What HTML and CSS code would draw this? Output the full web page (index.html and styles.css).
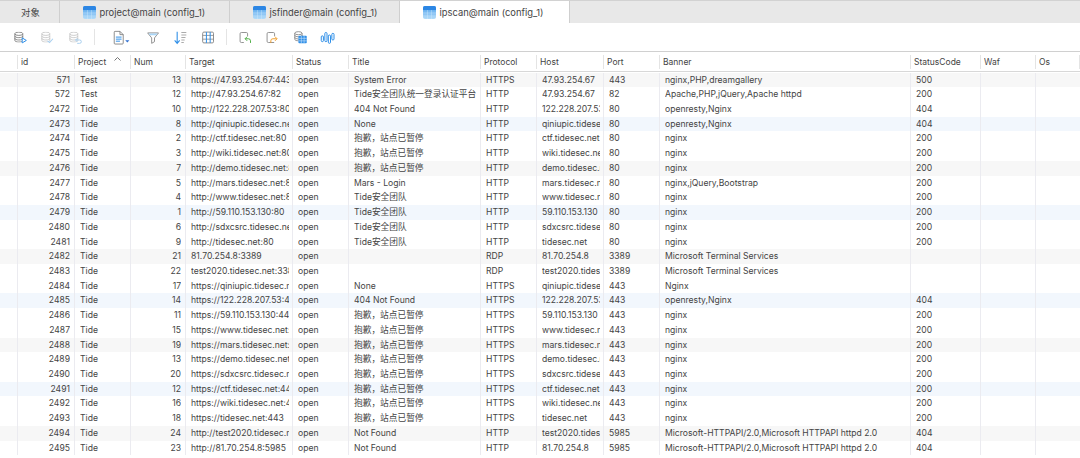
FILE: index.html
```html
<!DOCTYPE html>
<html lang="zh">
<head>
<meta charset="utf-8">
<title>ipscan@main (config_1)</title>
<link rel="stylesheet" href="styles.css">
</head>
<body>
<svg class="defs" width="0" height="0" aria-hidden="true">
  <defs>
    <linearGradient id="tg" x1="0" y1="0" x2="0" y2="1"><stop offset="0" stop-color="#4a9fec"/><stop offset="1" stop-color="#b4dcf9"/></linearGradient>
    <symbol id="tabicon" viewBox="0 0 13 13"><rect width="13" height="13" rx="2" fill="url(#tg)"/><path d="M0 2a2 2 0 0 1 2-2h9a2 2 0 0 1 2 2v2h-13z" fill="#2c86e4"/><path d="M0 7h13M0 10h13M4.500 4v9M8.500 4v9" stroke="#d8edfc" stroke-width=".5" stroke-opacity=".7" fill="none"/></symbol>
    <symbol id="db" viewBox="0 0 12 13"><ellipse cx="6" cy="2.500" rx="4.800" ry="2" fill="none" stroke="currentColor"/><path d="M1.200 2.500v8c0 1.100 2.100 2 4.800 2s4.800-.9 4.800-2v-8M1.200 5.200c0 1.100 2.100 2 4.800 2s4.800-.9 4.800-2M1.200 8c0 1.100 2.100 2 4.800 2s4.800-.9 4.800-2" fill="none" stroke="currentColor"/></symbol>
  </defs>
</svg>
<nav class="tabs">
  <div class="tab plain">对象</div>
  <div class="tab"><svg class="ti"><use href="#tabicon"/></svg>project@main (config_1)</div>
  <div class="tab"><svg class="ti"><use href="#tabicon"/></svg>jsfinder@main (config_1)</div>
  <div class="tab active"><svg class="ti"><use href="#tabicon"/></svg>ipscan@main (config_1)</div>
</nav>
<div class="toolbar">
  <div class="group g1">
    <svg class="ic" viewBox="0 0 18 18"><use href="#db" x="1" y="2" width="12" height="13" color="#777"/><path d="M11 9.500v6l5-3z" fill="#fff" stroke="#2f8fe8" stroke-width="1.200"/></svg>
    <svg class="ic" viewBox="0 0 18 18"><use href="#db" x="1" y="2" width="12" height="13" color="#c4c4c4"/><path d="M9 13l2.500 2 4-4.500" fill="none" stroke="#a9d0f0" stroke-width="1.300"/></svg>
    <svg class="ic" viewBox="0 0 18 18"><use href="#db" x="1" y="2" width="12" height="13" color="#c4c4c4"/><path d="M9.500 12h4.500a2 2 0 0 1 0 4h-3M11 10l-2 2 2 2" fill="none" stroke="#a9d0f0" stroke-width="1.200"/></svg>
  </div>
  <div class="group g2">
    <svg class="ic wide" viewBox="0 0 22 18"><path d="M2.500 1.500h6l4 4v10.500a1 1 0 0 1-1 1h-9a1 1 0 0 1-1-1v-13.500a1 1 0 0 1 1-1zM8.500 1.500v4h4" fill="#fff" stroke="#777"/><path d="M3.500 8.500h7M3.500 11h7M3.500 13.500h5" stroke="#2f8fe8" stroke-width="1.200"/><path d="M15 12.500h5l-2.500 2.500z" fill="#2f6fd0"/></svg>
    <svg class="ic" viewBox="0 0 18 18"><path d="M2 3.500h13l-4.800 6v4.500l-3.400 2v-6.500z" fill="none" stroke="#8a8a8a" stroke-width="1.100"/><path d="M3 4.200h11l-1.800 2.200h-7.400z" fill="#a9d6f8"/></svg>
    <svg class="ic" viewBox="0 0 18 18"><path d="M5 2v13M2 12.500l3 3.500 3-3.500" fill="none" stroke="#2f8fe8" stroke-width="1.300"/><path d="M10 3h6M10 6h6M10 9h5M10 12h4M10 15h3" stroke="#9a9a9a"/></svg>
    <svg class="ic" viewBox="0 0 18 18"><rect x="2" y="2.500" width="13" height="13" rx="1.500" fill="none" stroke="#777"/><path d="M2 6.500h13M2 11h13" stroke="#8a8a8a"/><path d="M6.500 2.500v13M11 2.500v13" stroke="#2f8fe8" stroke-width="1.200"/></svg>
  </div>
  <div class="group g3">
    <svg class="ic" viewBox="0 0 18 18"><path d="M7 15h-3a1.500 1.500 0 0 1-1.500-1.500v-9a1.500 1.500 0 0 1 1.500-1.500h6a1.500 1.500 0 0 1 1.500 1.500v3" fill="none" stroke="#8a8a8a" stroke-width="1.100"/><path d="M15 15.500v-2.500a2.500 2.500 0 0 0-2.500-2.500h-4M11 8l-2.500 2.500 2.500 2.500" fill="none" stroke="#52b04a" stroke-width="1.200"/></svg>
    <svg class="ic" viewBox="0 0 18 18"><path d="M11 15h-7a1.500 1.500 0 0 1-1.500-1.500v-9a1.500 1.500 0 0 1 1.500-1.500h6a1.500 1.500 0 0 1 1.500 1.500v3" fill="none" stroke="#8a8a8a" stroke-width="1.100"/><path d="M7 15.500v-2.500a2.500 2.500 0 0 1 2.500-2.500h4.500M12 8l2.500 2.500-2.500 2.500" fill="none" stroke="#f0a030" stroke-width="1.200"/></svg>
    <svg class="ic" viewBox="0 0 18 18"><use href="#db" x="1" y="1" width="11" height="13" color="#777"/><rect x="6.500" y="7" width="10" height="9" rx="1" fill="#2f8fe8"/><path d="M6.500 10h10M6.500 13h10M10 7v9M13.300 7v9" stroke="#cfe6fa" stroke-width=".7"/></svg>
    <svg class="ic" viewBox="0 0 18 18"><g fill="none" stroke="#2f8fe8" stroke-width="1.200"><rect x="1.500" y="7" width="2.600" height="7" rx="1.300"/><rect x="5.800" y="3" width="2.600" height="11" rx="1.300"/><rect x="10" y="6" width="2.600" height="10" rx="1.300"/><rect x="14.200" y="4" width="2.600" height="8" rx="1.300"/></g></svg>
  </div>
</div>
<main class="grid">
  <div class="row head">
    <div class="c"></div><div class="c">id</div><div class="c sorted">Project<svg class="caret" viewBox="0 0 7 4"><path d="M.5 3.500l3-3 3 3" fill="none" stroke="#777"/></svg></div><div class="c">Num</div><div class="c">Target</div><div class="c">Status</div><div class="c">Title</div><div class="c">Protocol</div><div class="c">Host</div><div class="c">Port</div><div class="c">Banner</div><div class="c">StatusCode</div><div class="c">Waf</div><div class="c">Os</div>
  </div>
  <div class="rows">
    <div class="row grey"><div class="c"></div><div class="c n">571</div><div class="c">Test</div><div class="c n">13</div><div class="c">https://47.93.254.67:443</div><div class="c">open</div><div class="c">System Error</div><div class="c">HTTPS</div><div class="c">47.93.254.67</div><div class="c">443</div><div class="c">nginx,PHP,dreamgallery</div><div class="c">500</div><div class="c"></div><div class="c"></div></div>
    <div class="row"><div class="c"></div><div class="c n">572</div><div class="c">Test</div><div class="c n">12</div><div class="c">http://47.93.254.67:82</div><div class="c">open</div><div class="c">Tide<span class="zh">安全团队统一登录认证平台</span></div><div class="c">HTTP</div><div class="c">47.93.254.67</div><div class="c">82</div><div class="c">Apache,PHP,jQuery,Apache httpd</div><div class="c">200</div><div class="c"></div><div class="c"></div></div>
    <div class="row"><div class="c"></div><div class="c n">2472</div><div class="c">Tide</div><div class="c n">10</div><div class="c">http://122.228.207.53:80</div><div class="c">open</div><div class="c">404 Not Found</div><div class="c">HTTP</div><div class="c">122.228.207.53</div><div class="c">80</div><div class="c">openresty,Nginx</div><div class="c">404</div><div class="c"></div><div class="c"></div></div>
    <div class="row blue"><div class="c"></div><div class="c n">2473</div><div class="c">Tide</div><div class="c n">8</div><div class="c">http://qiniupic.tidesec.net:80</div><div class="c">open</div><div class="c">None</div><div class="c">HTTP</div><div class="c">qiniupic.tidesec.net</div><div class="c">80</div><div class="c">openresty,Nginx</div><div class="c">404</div><div class="c"></div><div class="c"></div></div>
    <div class="row"><div class="c"></div><div class="c n">2474</div><div class="c">Tide</div><div class="c n">2</div><div class="c">http://ctf.tidesec.net:80</div><div class="c">open</div><div class="c"><span class="zh">抱歉&#xFF0C;站点已暂停</span></div><div class="c">HTTP</div><div class="c">ctf.tidesec.net</div><div class="c">80</div><div class="c">nginx</div><div class="c">200</div><div class="c"></div><div class="c"></div></div>
    <div class="row"><div class="c"></div><div class="c n">2475</div><div class="c">Tide</div><div class="c n">3</div><div class="c">http://wiki.tidesec.net:80</div><div class="c">open</div><div class="c"><span class="zh">抱歉&#xFF0C;站点已暂停</span></div><div class="c">HTTP</div><div class="c">wiki.tidesec.net</div><div class="c">80</div><div class="c">nginx</div><div class="c">200</div><div class="c"></div><div class="c"></div></div>
    <div class="row grey"><div class="c"></div><div class="c n">2476</div><div class="c">Tide</div><div class="c n">7</div><div class="c">http://demo.tidesec.net:80</div><div class="c">open</div><div class="c"><span class="zh">抱歉&#xFF0C;站点已暂停</span></div><div class="c">HTTP</div><div class="c">demo.tidesec.net</div><div class="c">80</div><div class="c">nginx</div><div class="c">200</div><div class="c"></div><div class="c"></div></div>
    <div class="row"><div class="c"></div><div class="c n">2477</div><div class="c">Tide</div><div class="c n">5</div><div class="c">http://mars.tidesec.net:80</div><div class="c">open</div><div class="c">Mars - Login</div><div class="c">HTTP</div><div class="c">mars.tidesec.net</div><div class="c">80</div><div class="c">nginx,jQuery,Bootstrap</div><div class="c">200</div><div class="c"></div><div class="c"></div></div>
    <div class="row"><div class="c"></div><div class="c n">2478</div><div class="c">Tide</div><div class="c n">4</div><div class="c">http://www.tidesec.net:80</div><div class="c">open</div><div class="c">Tide<span class="zh">安全团队</span></div><div class="c">HTTP</div><div class="c">www.tidesec.net</div><div class="c">80</div><div class="c">nginx</div><div class="c">200</div><div class="c"></div><div class="c"></div></div>
    <div class="row blue"><div class="c"></div><div class="c n">2479</div><div class="c">Tide</div><div class="c n">1</div><div class="c">http://59.110.153.130:80</div><div class="c">open</div><div class="c">Tide<span class="zh">安全团队</span></div><div class="c">HTTP</div><div class="c">59.110.153.130</div><div class="c">80</div><div class="c">nginx</div><div class="c">200</div><div class="c"></div><div class="c"></div></div>
    <div class="row"><div class="c"></div><div class="c n">2480</div><div class="c">Tide</div><div class="c n">6</div><div class="c">http://sdxcsrc.tidesec.net:80</div><div class="c">open</div><div class="c">Tide<span class="zh">安全团队</span></div><div class="c">HTTP</div><div class="c">sdxcsrc.tidesec.net</div><div class="c">80</div><div class="c">nginx</div><div class="c">200</div><div class="c"></div><div class="c"></div></div>
    <div class="row"><div class="c"></div><div class="c n">2481</div><div class="c">Tide</div><div class="c n">9</div><div class="c">http://tidesec.net:80</div><div class="c">open</div><div class="c">Tide<span class="zh">安全团队</span></div><div class="c">HTTP</div><div class="c">tidesec.net</div><div class="c">80</div><div class="c">nginx</div><div class="c">200</div><div class="c"></div><div class="c"></div></div>
    <div class="row grey"><div class="c"></div><div class="c n">2482</div><div class="c">Tide</div><div class="c n">21</div><div class="c">81.70.254.8:3389</div><div class="c">open</div><div class="c"></div><div class="c">RDP</div><div class="c">81.70.254.8</div><div class="c">3389</div><div class="c">Microsoft Terminal Services</div><div class="c"></div><div class="c"></div><div class="c"></div></div>
    <div class="row"><div class="c"></div><div class="c n">2483</div><div class="c">Tide</div><div class="c n">22</div><div class="c">test2020.tidesec.net:3389</div><div class="c">open</div><div class="c"></div><div class="c">RDP</div><div class="c">test2020.tidesec.net</div><div class="c">3389</div><div class="c">Microsoft Terminal Services</div><div class="c"></div><div class="c"></div><div class="c"></div></div>
    <div class="row"><div class="c"></div><div class="c n">2484</div><div class="c">Tide</div><div class="c n">17</div><div class="c">https://qiniupic.tidesec.net:443</div><div class="c">open</div><div class="c">None</div><div class="c">HTTPS</div><div class="c">qiniupic.tidesec.net</div><div class="c">443</div><div class="c">Nginx</div><div class="c"></div><div class="c"></div><div class="c"></div></div>
    <div class="row blue"><div class="c"></div><div class="c n">2485</div><div class="c">Tide</div><div class="c n">14</div><div class="c">https://122.228.207.53:443</div><div class="c">open</div><div class="c">404 Not Found</div><div class="c">HTTPS</div><div class="c">122.228.207.53</div><div class="c">443</div><div class="c">openresty,Nginx</div><div class="c">404</div><div class="c"></div><div class="c"></div></div>
    <div class="row"><div class="c"></div><div class="c n">2486</div><div class="c">Tide</div><div class="c n">11</div><div class="c">https://59.110.153.130:443</div><div class="c">open</div><div class="c"><span class="zh">抱歉&#xFF0C;站点已暂停</span></div><div class="c">HTTPS</div><div class="c">59.110.153.130</div><div class="c">443</div><div class="c">nginx</div><div class="c">200</div><div class="c"></div><div class="c"></div></div>
    <div class="row"><div class="c"></div><div class="c n">2487</div><div class="c">Tide</div><div class="c n">15</div><div class="c">https://www.tidesec.net:443</div><div class="c">open</div><div class="c"><span class="zh">抱歉&#xFF0C;站点已暂停</span></div><div class="c">HTTPS</div><div class="c">www.tidesec.net</div><div class="c">443</div><div class="c">nginx</div><div class="c">200</div><div class="c"></div><div class="c"></div></div>
    <div class="row grey"><div class="c"></div><div class="c n">2488</div><div class="c">Tide</div><div class="c n">19</div><div class="c">https://mars.tidesec.net:443</div><div class="c">open</div><div class="c"><span class="zh">抱歉&#xFF0C;站点已暂停</span></div><div class="c">HTTPS</div><div class="c">mars.tidesec.net</div><div class="c">443</div><div class="c">nginx</div><div class="c">200</div><div class="c"></div><div class="c"></div></div>
    <div class="row"><div class="c"></div><div class="c n">2489</div><div class="c">Tide</div><div class="c n">13</div><div class="c">https://demo.tidesec.net:443</div><div class="c">open</div><div class="c"><span class="zh">抱歉&#xFF0C;站点已暂停</span></div><div class="c">HTTPS</div><div class="c">demo.tidesec.net</div><div class="c">443</div><div class="c">nginx</div><div class="c">200</div><div class="c"></div><div class="c"></div></div>
    <div class="row"><div class="c"></div><div class="c n">2490</div><div class="c">Tide</div><div class="c n">20</div><div class="c">https://sdxcsrc.tidesec.net:443</div><div class="c">open</div><div class="c"><span class="zh">抱歉&#xFF0C;站点已暂停</span></div><div class="c">HTTPS</div><div class="c">sdxcsrc.tidesec.net</div><div class="c">443</div><div class="c">nginx</div><div class="c">200</div><div class="c"></div><div class="c"></div></div>
    <div class="row blue"><div class="c"></div><div class="c n">2491</div><div class="c">Tide</div><div class="c n">12</div><div class="c">https://ctf.tidesec.net:443</div><div class="c">open</div><div class="c"><span class="zh">抱歉&#xFF0C;站点已暂停</span></div><div class="c">HTTPS</div><div class="c">ctf.tidesec.net</div><div class="c">443</div><div class="c">nginx</div><div class="c">200</div><div class="c"></div><div class="c"></div></div>
    <div class="row"><div class="c"></div><div class="c n">2492</div><div class="c">Tide</div><div class="c n">16</div><div class="c">https://wiki.tidesec.net:443</div><div class="c">open</div><div class="c"><span class="zh">抱歉&#xFF0C;站点已暂停</span></div><div class="c">HTTPS</div><div class="c">wiki.tidesec.net</div><div class="c">443</div><div class="c">nginx</div><div class="c">200</div><div class="c"></div><div class="c"></div></div>
    <div class="row"><div class="c"></div><div class="c n">2493</div><div class="c">Tide</div><div class="c n">18</div><div class="c">https://tidesec.net:443</div><div class="c">open</div><div class="c"><span class="zh">抱歉&#xFF0C;站点已暂停</span></div><div class="c">HTTPS</div><div class="c">tidesec.net</div><div class="c">443</div><div class="c">nginx</div><div class="c">200</div><div class="c"></div><div class="c"></div></div>
    <div class="row grey"><div class="c"></div><div class="c n">2494</div><div class="c">Tide</div><div class="c n">24</div><div class="c">http://test2020.tidesec.net:5985</div><div class="c">open</div><div class="c">Not Found</div><div class="c">HTTP</div><div class="c">test2020.tidesec.net</div><div class="c">5985</div><div class="c">Microsoft-HTTPAPI/2.0,Microsoft HTTPAPI httpd 2.0</div><div class="c">404</div><div class="c"></div><div class="c"></div></div>
    <div class="row"><div class="c"></div><div class="c n">2495</div><div class="c">Tide</div><div class="c n">23</div><div class="c">http://81.70.254.8:5985</div><div class="c">open</div><div class="c">Not Found</div><div class="c">HTTP</div><div class="c">81.70.254.8</div><div class="c">5985</div><div class="c">Microsoft-HTTPAPI/2.0,Microsoft HTTPAPI httpd 2.0</div><div class="c">404</div><div class="c"></div><div class="c"></div></div>
  </div>
</main>
</body>
</html>
```
FILE: styles.css
```css
* { box-sizing: border-box; }
html, body { margin: 0; height: 458px; overflow: hidden; background: #fff; }
body { font-family: Inter, "Liberation Sans", "Noto Sans CJK SC", sans-serif; color: #444; font-size: 8.600px; }
.defs { display: block; height: 0; }

.tabs { display: flex; height: 23px; background: #e8e8e8; border-top: 1px solid #d2d2d2; color: #444; font-size: 9.400px; }
.tab { width: 170px; display: flex; align-items: center; padding-left: 23px; gap: 3.500px; border-right: 1px solid #cfcfcf; white-space: nowrap; }
.tab.plain { width: 60px; padding-left: 21px; font-family: "Noto Sans CJK SC", sans-serif; }
.tab.active { background: #fff; border-left: 1px solid #cfcfcf; margin-left: -1px; width: 171px; }
.ti { width: 13px; height: 13px; flex: none; }

.toolbar { display: flex; align-items: center; height: 28px; padding-left: 12.500px; background: #fff; }
.group { display: flex; align-items: center; gap: 12.500px; }
.g1 { width: 82.500px; height: 16px; border-right: 1px solid #e4e4e4; }
.g2 { width: 132px; height: 16px; padding-left: 18px; border-right: 1px solid #e4e4e4; }
.g3 { padding-left: 10.500px; }
.ic { width: 15px; height: 15px; flex: none; }
.ic.wide { width: 18px; margin-right: 2px; }

.row { display: grid; grid-template-columns: 18px 57px 56px 55px 107px 56px 132px 56px 67px 56px 251px 70px 55px 44px; height: 14.720px; line-height: 14.720px; }
.c { padding: 0 3px 0 5px; border-right: 1px solid #ebebf0; white-space: nowrap; overflow: clip; overflow-clip-margin: content-box; }
.c.n { text-align: right; padding-right: 4px; }
.c:last-child { border-right: 0; }
.zh { font-family: "Noto Sans CJK SC", sans-serif; font-size: 8.700px; }
.grey { background: #f7f7f7; }
.blue { background: #f2f7fd; }

.head { height: 21px; border-top: 1px solid #d0d0d0; border-bottom: 1px solid #d8d8d8; background: #fff; font-size: 8.500px; }
.head .c { padding-left: 3px; position: relative; display: block; border-right: 1px solid #e4e4e4; height: 14px; margin-top: 3px; line-height: 15px; }
.caret { position: absolute; right: 9px; top: 2px; width: 7px; height: 4px; }
.rows { display: block; padding-top: 0.600px; }
```
